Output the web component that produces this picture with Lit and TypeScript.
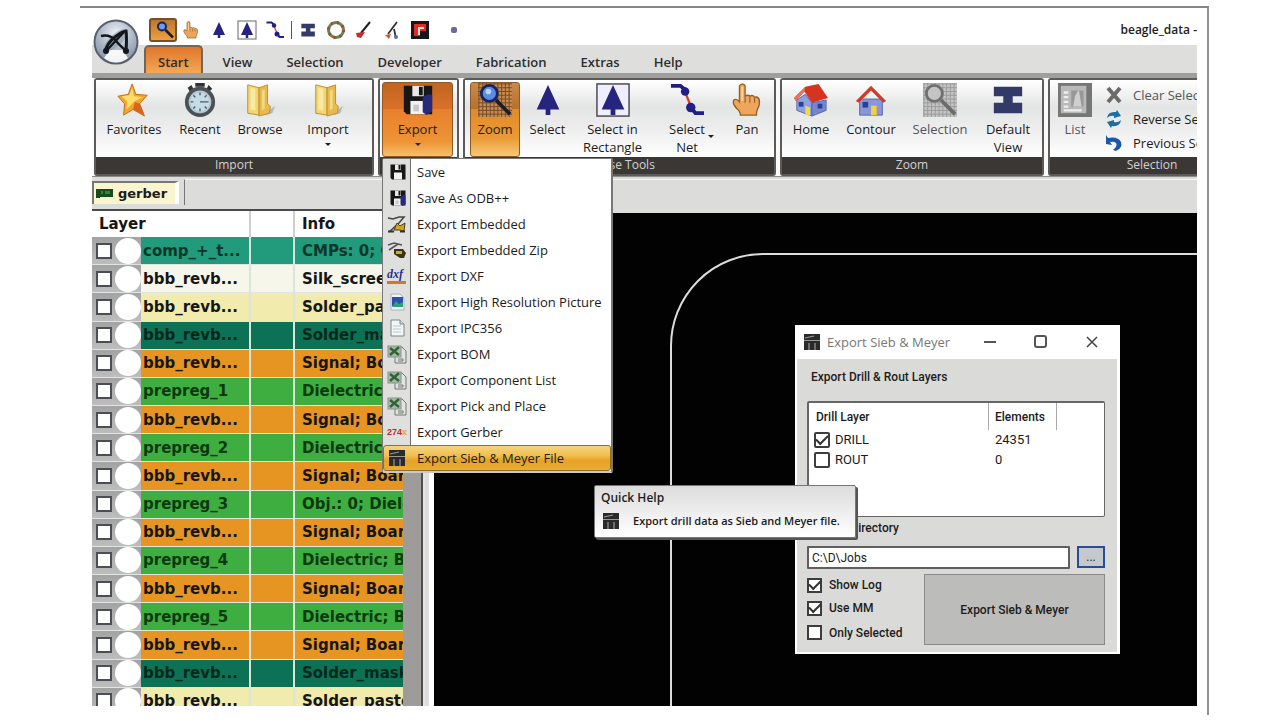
import { LitElement, html, svg, css, nothing } from "lit";
import { customElement, state } from "lit/decorators.js";
import { classMap } from "lit/directives/class-map.js";

const large = (body: unknown) => html`<svg class="ico" viewBox="0 0 36 36" aria-hidden="true">${body}</svg>`;
const small = (body: unknown) => html`<svg class="sico" viewBox="0 0 20 20" aria-hidden="true">${body}</svg>`;

const grid = (c: string, n: number) => {
  const out = [];
  for (let i = 1; i < n; i += 4) out.push(svg`<path d="M${i} 0V${n}M0 ${i}H${n}" stroke=${c} stroke-width="1"/>`);
  return out;
};

const arrow = svg`<path d="M18 2 30 28H20.500V34H15.500V28H6Z" fill="#26247e"/>`;
const hand = svg`<path d="M10 3c2-3 6-2 6 1v10q3-2 5 0 3-2 5 1 4-1 5 3 1 5-2 10-1 2-1 6H11q0-4-4-7-5-6-3-9 3-2 6 2Z" fill="#eda75c" stroke="#9c5c20" stroke-width="1.400"/><path d="M16 15v6M21 15v6M26 16v5" stroke="#9c5c20" stroke-width="1.200"/><path d="M13 4v15" stroke="#f9d3a0" stroke-width="2"/>`;
const net = svg`<path d="M1 3H11L17 8M22 26l5 6H36" fill="none" stroke="#1f1f87" stroke-width="4"/><path d="M17 12l6 15" stroke="#d6402a" stroke-width="2.500"/><circle cx="16" cy="9" r="4.500" fill="#1f1f87"/><circle cx="22" cy="26" r="5" fill="#1f1f87"/>`;
const beam = svg`<path d="M3 4H33V14H23V21H33V32H3V21H13V14H3Z" fill="#323a68"/>`;
const folder = svg`<path d="M24 32l10-8-3 8-7 2Z" fill="#888" opacity=".5"/><path d="M5 2l12 3v29L5 32Z" fill="#f3d673" stroke="#b8902f"/><path d="M17 5l9-3v20l3 3-1 7-11 3Z" fill="#e6bb4b" stroke="#b8902f"/><path d="M8 5l5 1v23l-5-1Z" fill="#fbeaa6"/><path d="M20 8l3-1v20l-3 2Z" fill="#f4d884"/>`;
const disk = svg`<path d="M3 3H33V33H6L3 30Z" fill="#171717"/><rect x="12" y="3" width="12" height="11" fill="#e8e8e8"/><rect x="19" y="4" width="4" height="9" fill="#171717"/><rect x="10" y="19" width="16" height="14" fill="#f2f2f2"/>`;
const disk2 = svg`${disk}<path d="M23 16q5-6 10-3V30l-6 4-4-3Z" fill="#252a7c"/><path d="M13 23h6v7h-6Z" fill="#c7c7c7"/>`;
const house = (roof: string) => svg`<path d="M6 17h24v17H6Z" fill="#8b96d8" stroke="#5763a8"/><path d="M2 19 18 3 34 19l-3 2L18 8 5 21Z" fill=${roof}/><rect x="18" y="24" width="6" height="10" fill="#f0d23a"/><rect x="9" y="20" width="6" height="6" fill="#27408f"/>`;
const home3d = svg`<path d="M3 18 12 12l7 9v14L3 29Z" fill="#8fa0e0" stroke="#5765ad"/><path d="M19 21l15-3v11l-15 6Z" fill="#7787cf" stroke="#5765ad"/><path d="M12 4 26 1l10 15-17 5L11 9 2 19 0 16Z" fill="#d5351f"/><path d="M12 4 0 16l2 3L11 9Z" fill="#e9745a"/><path d="M12 24l5 2v9l-5-2Z" fill="#f2dc3c"/><rect x="5" y="20" width="5" height="5" fill="#27408f"/><rect x="25" y="22" width="5" height="5" fill="#27408f"/>`;
const zoomIcon = svg`<rect width="36" height="36" fill="#c98b4b"/>${grid("#71492a", 36)}<path d="M19 18 34 33" stroke="#1b1b2b" stroke-width="4"/><circle cx="12" cy="11" r="8.500" fill="#5a8ce6" stroke="#16245f" stroke-width="3"/><circle cx="11" cy="9" r="3" fill="#b7d2fb"/>`;
const zoomGray = svg`<rect width="36" height="36" fill="#c4c4c4"/>${grid("#9a9a9a", 36)}<path d="M19 18 34 33" stroke="#6c6c6c" stroke-width="4"/><circle cx="12" cy="11" r="8.500" fill="#c4c4c4" stroke="#707070" stroke-width="3"/>`;
const star = svg`<path d="M16 1l4 11 12 1-8 9 5 13-12-7L7 34l1-12-7-8 11-2Z" fill="#f2a72c" stroke="#c26a17"/><path d="M16 5l2 9 9 1-8 4-9 9 1-8-6-6 8-1Z" fill="#ffdf6b"/><path d="M19 20l5 2 5 12-12-6Z" fill="#d9621d"/>`;
const clock = svg`<path d="M13 0h10v4H13ZM5 5l4-3 2 4-4 3ZM27 2l4 4-3 3-3-3Z" fill="#333"/><circle cx="18" cy="20" r="14" fill="#b7c8d0" stroke="#4a5256" stroke-width="4"/><circle cx="18" cy="20" r="10" fill="#c6dbe3"/><path d="M18 20H27M18 10v3M18 27v3M8 20h3M11 13l2 2M11 27l2-2M25 27l-2-2M25 13l-2 2" stroke="#3a6676" stroke-width="1.500"/>`;
const listGray = svg`<rect width="36" height="36" fill="#767676"/><rect x="3" y="3" width="27" height="29" fill="#b9b9b9"/><path d="M6 10h5M6 15h5M6 20h5M6 25h5M6 29h19" stroke="#eee" stroke-width="2.500"/><path d="M14 8h13v17H14Z" fill="#989898"/><path d="M16 25l2-11 4-7 3 18" fill="#cfcfcf"/>`;
const machine = svg`<rect x="2" y="2" width="16" height="16" fill="#2a2a2a"/><path d="M2 8.500h16M3 6l9-2" stroke="#999" stroke-width="1.200"/><path d="M7 11v7M13 11v7" stroke="#999" stroke-width="1.200"/>`;
const sheet = svg`<path d="M4 2h9l4 4v12H4Z" fill="#f4f7f8" stroke="#788"/><path d="M13 2v4h4" fill="#cdd" stroke="#788"/><path d="M6 8h8M6 11h8M6 14h8" stroke="#b8c8cc"/>`;
const excel = svg`<path d="M8 3h7l4 4v12H8Z" fill="#dfe3e1" stroke="#777"/><rect x="1" y="2" width="13" height="11" fill="#aab8aa" stroke="#8a958a"/><path d="M3 4l9 7M12 3l-9 8" stroke="#2f6636" stroke-width="2.500"/><path d="M11 15h5v2h-5" fill="none" stroke="#777"/>`;

const menuItems: [string, unknown][] = [
  ["Save", svg`<g transform="translate(2 1) scale(.5)">${disk}</g>`],
  ["Save As ODB++", svg`<g transform="translate(2 1) scale(.5)">${disk2}</g>`],
  ["Export Embedded", svg`<path d="M1 4l5 1 6-2 5 0-5 6-10 9" fill="none" stroke="#444" stroke-width="1.600"/><path d="M7 16l3-7 3 3 5-3-1 8-5-1Z" fill="#d7a41d" stroke="#4c3b10"/><path d="M1 17.500h6M13 17.500h5" stroke="#333" stroke-width="2"/>`],
  ["Export Embedded Zip", svg`<path d="M1 5l6-2 8 2M2 10l9-6" fill="none" stroke="#555" stroke-width="1.600"/><path d="M7 9h9l3 4-2 5h-4l-6-4Z" fill="#3b3414"/><path d="M9 11h6v3H9Z" fill="#d0aa28"/>`],
  ["Export DXF", svg`<text x="0" y="12" class="dxf">dxf</text><rect x="0" y="15" width="19" height="3" fill="#d3772b"/>`],
  ["Export High Resolution Picture", svg`<path d="M4 2h9l4 4v12H4Z" fill="#eef3fb" stroke="#a9b4c4"/><rect x="5" y="5" width="11" height="9" fill="#2f4fb0"/><path d="M5 15l4-6 3 3 4-2v5Z" fill="#2fa07a"/>`],
  ["Export IPC356", sheet],
  ["Export BOM", excel],
  ["Export Component List", excel],
  ["Export Pick and Place", excel],
  ["Export Gerber", svg`<text x="0" y="13" class="gbr">274<tspan fill="#e8a33a">x</tspan></text>`],
  ["Export Sieb & Meyer File", machine],
];

const layers: [string, string, string][] = [
  ["comp", "comp_+_t...", "CMPs: 0; Comp"],
  ["silk", "bbb_revb...", "Silk_screen"],
  ["paste", "bbb_revb...", "Solder_paste"],
  ["mask", "bbb_revb...", "Solder_mask"],
  ["signal", "bbb_revb...", "Signal; Board"],
  ["prepreg", "prepreg_1", "Dielectric; Board"],
  ["signal", "bbb_revb...", "Signal; Board"],
  ["prepreg", "prepreg_2", "Dielectric; Board"],
  ["signal", "bbb_revb...", "Signal; Board"],
  ["prepreg", "prepreg_3", "Obj.: 0; Dielectric"],
  ["signal", "bbb_revb...", "Signal; Board"],
  ["prepreg", "prepreg_4", "Dielectric; Board"],
  ["signal", "bbb_revb...", "Signal; Board"],
  ["prepreg", "prepreg_5", "Dielectric; Board"],
  ["signal", "bbb_revb...", "Signal; Board"],
  ["mask", "bbb_revb...", "Solder_mask"],
  ["paste", "bbb_revb...", "Solder_paste"],
];

type Tool = { label: string; icon: unknown; on?: boolean; drop?: boolean; beside?: boolean; dim?: boolean };
const groups: { key: string; title: string; tools: Tool[] }[] = [
  { key: "import", title: "Import", tools: [
    { label: "Favorites", icon: star }, { label: "Recent", icon: clock },
    { label: "Browse", icon: folder }, { label: "Import", icon: folder, drop: true } ] },
  { key: "export", title: "", tools: [{ label: "Export", icon: disk2, on: true, drop: true }] },
  { key: "mouse", title: "Mouse Tools", tools: [
    { label: "Zoom", icon: zoomIcon, on: true }, { label: "Select", icon: arrow },
    { label: "Select in Rectangle", icon: svg`<rect x="1" y="1" width="34" height="34" fill="#eef" stroke="#444" stroke-width="1.500"/>${arrow}` },
    { label: "Select Net", icon: net, beside: true }, { label: "Pan", icon: hand } ] },
  { key: "zoom", title: "Zoom", tools: [
    { label: "Home", icon: home3d }, { label: "Contour", icon: house("#cf3a2a") },
    { label: "Selection", icon: zoomGray, dim: true }, { label: "Default View", icon: beam } ] },
];

const quick: [string, unknown][] = [
  ["Zoom", svg`<g transform="translate(3 1) scale(.5)"><path d="M19 18 34 33" stroke="#1b1b2b" stroke-width="5"/><circle cx="12" cy="11" r="8" fill="#6f9cea" stroke="#16245f" stroke-width="4"/></g>`],
  ["Pan", svg`<g transform="translate(1 1) scale(.5)">${hand}</g>`],
  ["Select", svg`<g transform="translate(1 1) scale(.5)">${arrow}</g>`],
  ["Select in rectangle", svg`<rect x="1" y="1" width="18" height="18" fill="#fff" stroke="#666"/><g transform="translate(1 1) scale(.5)">${arrow}</g>`],
  ["Select net", svg`<g transform="translate(1 1) scale(.5)">${net}</g>`],
  ["Default view", svg`<g transform="translate(2 2) scale(.45)">${beam}</g>`],
  ["Pad", svg`<circle cx="10" cy="10" r="7.500" fill="#fff" stroke="#5d8a4b" stroke-width="3"/><circle cx="10" cy="10" r="7.500" fill="none" stroke="#b0413a" stroke-width="3" stroke-dasharray="2 4"/>`],
  ["Draw line", svg`<path d="M7 13 16 2" stroke="#222" stroke-width="2"/><path d="M2 13l9-1-4 6-4-1Z" fill="#cc2b24"/>`],
  ["Draw text", svg`<path d="M6 14 15 2M12 9l2 9" stroke="#333" stroke-width="1.800"/><path d="M3 15l6-1-2 5Z" fill="#d2572c"/><circle cx="14" cy="17" r="2" fill="#4c74b8"/>`],
  ["Board", svg`<rect x="1" y="1" width="18" height="18" fill="#181818"/><path d="M4 4h12v7h-6v5H4Z" fill="#df2f25"/><path d="M10 7h4v2h-4v6H8V7Z" fill="#f4dcd8"/>`],
];

@customElement("app-root")
export class AppRoot extends LitElement {
  @state() private active = 11;

  static styles = css`
    :host { display: flex; flex-direction: column; box-sizing: border-box; height: 100vh; padding: 6px 71px 6px 80px; background: #fff; color: #1c1c1c; font: 500 13px/18px "Open Sans", "Noto Sans", sans-serif; }
    * { box-sizing: border-box; }
    button { font: inherit; color: inherit; border: 0; background: none; padding: 0; margin: 0; }
    svg { display: block; }
    .frame { flex: 1; min-height: 0; display: flex; border-top: 2px solid #858585; border-right: 2px solid #909090; padding: 0 10px 9px 12px; }
    .app { position: relative; flex: 1; min-width: 0; min-height: 0; display: flex; flex-direction: column; overflow: hidden; }

    .title { flex: none; display: flex; align-items: center; height: 37px; padding-left: 57px; padding-top: 7px; }
    .title h1 { margin: 0 0 0 auto; font-size: 12px; font-weight: 600; white-space: nowrap; }
    .qbtn { width: 28px; height: 24px; display: grid; place-items: center; border-radius: 3px; }
    .qbtn.on { border: 2px solid #76502a; background: linear-gradient(#b9772f, #f0a03e); }
    .sico { flex: none; width: 20px; height: 20px; overflow: visible; }
    .vsep { width: 1px; height: 18px; margin: 0 2px; background: #555; }
    .more { margin-left: 17px; width: 6px; height: 6px; border-radius: 2px; background: #6a6a9a; }
    .orb { position: absolute; left: 1px; top: 11px; width: 46px; height: 46px; z-index: 2; }

    .tabs { flex: none; display: flex; height: 28px; padding-left: 52px; background: #dededc; font-weight: 600; }
    .tabs a { display: grid; place-items: center; padding: 6px 17px 0; color: #2d2d2d; text-decoration: none; }
    .tabs a.on { padding: 4px 12px 0; margin-right: 3px; border: 2px solid #6f675e; border-bottom: 0; border-radius: 5px 5px 0 0; background: linear-gradient(#e0762a, #f3a855); }

    .ribbon { flex: none; display: flex; gap: 4px; padding: 5px 0 0 2px; background: linear-gradient(#9f9f9d 5px, #fafafa 5px); }
    .group { flex: none; border: 2px solid #5d5b5a; border-radius: 3px; }
    .tools { display: grid; height: 77px; background: linear-gradient(#fff, #e3e5e5 35%, #ececec 60%, #fff); }
    .gtitle { height: 17px; background: #3b3735; color: #d2d2d0; font-size: 12px; line-height: 15px; text-align: center; white-space: nowrap; }
    .import .tools { grid-template-columns: 76px 56px 64px 72px; padding-right: 8px; }
    .export .tools { grid-template-columns: 71px; padding: 0 4px 0 2px; }
    .mouse .tools { grid-template-columns: 50px 55px 75px 74px 46px; padding: 0 4px 0 5px; }
    .zoom .tools { grid-template-columns: 58px 62px 76px 60px; padding-right: 4px; }
    .selection { flex: 1 0 208px; }
    .selection .tools { grid-template-columns: 50px 1fr; }
    .tool { position: relative; display: flex; flex-direction: column; align-items: center; padding-top: 3px; }
    .tool .ico { flex: none; width: 34px; height: 34px; margin-bottom: 3px; }
    .tool.on { border: 1px solid #8a5a28; border-radius: 3px; margin-top: 2px; padding-top: 0; background: linear-gradient(#c0651f, #d9702a 35%, #e87f2b 36%, #ee9436 80%, #f7bf6a); }
    .mouse .tool.on { background: linear-gradient(#c98b4b, #b9702c 35%, #e08a2a 36%, #ea9a34 75%, #f7c878); }
    .tool.dim { color: #555; }
    .tool.narrow { padding-left: 14px; padding-right: 14px; }
    .drop { width: 0; height: 0; border: 3px solid transparent; border-top-color: #222; margin-top: 5px; }
    .drop.beside { position: absolute; right: 10px; top: 50px; }
    .cmds { display: flex; flex-direction: column; padding-top: 3px; }
    .cmd { display: flex; align-items: center; gap: 9px; height: 24px; padding-left: 4px; white-space: nowrap; }
    .cmd.dim { color: #555; }

    .docs { flex: none; display: flex; height: 33px; border-top: 1px solid #8b8b89; background: #dcdcda; }
    .doc { display: flex; align-items: center; gap: 5px; width: 87px; height: 23px; margin: 4px 5px 0 0; padding-left: 2px; border: 1px solid #777; border-width: 2px 0 0 2px; border-right: 4px solid #fff; background: #f8f5cf; font: bold 13px/18px "DejaVu Sans", sans-serif; }
    .doc .pcb { width: 17px; height: 9px; }
    .docfill { flex: 1; margin-top: 2px; border-left: 1px solid #777; border-top: 1px solid #f5f5f5; height: 26px; }

    .work { flex: 1; min-height: 0; display: flex; }
    .side { flex: none; width: 342px; display: flex; overflow: hidden; border-top: 2px solid #4a4a4a; background: #e4e4e4; }
    .tablebox { width: 311px; overflow: hidden; }
    .scroll { width: 18px; background: #9d9c9b; }
    .split { width: 4px; border-left: 2px solid #4e4e4e; }
    .split2 { width: 9px; border-left: 4px solid #dedede; background: #fff; }
    table { border-collapse: separate; border-spacing: 0; }
    .layers { table-layout: fixed; width: 311px; height: 505px; font: bold 15px/18px "DejaVu Sans", sans-serif; color: #161616; }
    .layers th { height: 26px; padding: 0 7px; text-align: left; background: #fff; border-right: 2px solid #cfcfcf; }
    .layers td { padding: 0 0 0 2px; overflow: hidden; white-space: nowrap; border-right: 2px solid #d9e6dc; border-bottom: 1px solid #dfe6df; }
    .layers th:last-child, .layers td:last-child { border-right: 0; padding-left: 7px; }
    .layers td.vis { padding: 0 0 0 4px; border-right: 0; background: linear-gradient(#a3a3a3, #bdbdbd); }
    .c1 { width: 49px; } .c2 { width: 110px; } .c3 { width: 44px; }
    .visrow { display: flex; align-items: center; gap: 3px; }
    .knob { width: 26px; height: 26px; border-radius: 50%; background: #fff; }
    .comp { background: #229a7c; color: #0b3629; }
    .silk { background: #f7f6ea; }
    .paste { background: #f1ebae; }
    .mask { background: #0d7255; color: #04271b; }
    .signal { background: #e69422; }
    .prepreg { background: #3eae40; color: #0c3a10; }

    input[type="checkbox"] { appearance: none; flex: none; display: grid; place-items: center; width: 16px; height: 16px; margin: 0; border: 2px solid #3d3d3d; background: #fff; }
    input[type="checkbox"]:checked::after { content: ""; width: 10px; height: 5px; margin-top: -3px; border: solid #333; border-width: 0 0 2px 2px; transform: rotate(-45deg); }
    .side input[type="checkbox"] { border-color: #4b4f55; }

    .canvas { position: relative; flex: 1; min-width: 0; border-top: 4px solid #dcdcda; background: #020203; overflow: hidden; }
    .outline { position: absolute; inset: 0; width: 100%; height: 100%; }

    .menu { position: absolute; left: 290px; top: 150px; width: 231px; z-index: 3; margin: 0; padding: 0; border: 1px solid #777; border-right-width: 2px; border-bottom: 2px solid #c9c9c9; border-radius: 2px; background: linear-gradient(90deg, #dfdfdd 27px, #6f6f6f 27px, #6f6f6f 28px, #fff 28px); list-style: none; font-weight: 400; }
    .menu button { display: flex; align-items: center; gap: 10px; width: 100%; height: 26px; padding-left: 4px; text-align: left; white-space: nowrap; }
    .menu button.on { border: 1px solid #93701f; border-radius: 3px; padding-left: 3px; background: linear-gradient(#f3d483, #f1bf4d 40%, #e6a226 60%, #e9ac36); }
    .dxf { font: italic bold 12px "Liberation Serif", serif; fill: #2a2f86; }
    .gbr { font: bold 9px "Liberation Sans", sans-serif; fill: #c3272b; }

    .tip { position: absolute; left: 502px; top: 477px; width: 262px; z-index: 3; padding: 3px 6px 4px; border: 1px solid #777; border-radius: 2px; background: linear-gradient(#dcdcdc, #fff); box-shadow: 2px 2px 0 #555; font-size: 12px; }
    .tip strong { display: block; font-weight: 600; }
    .tip p { display: flex; align-items: center; gap: 12px; margin: 4px 0 2px; font-weight: 600; font-size: 11px; white-space: nowrap; }

    .dialog { position: absolute; left: 361px; top: 112px; width: 325px; border: solid #fff; border-width: 0 3px 2px 2px; background: #dadbd9; font: 12px/18px Roboto, "Liberation Sans", sans-serif; }
    .dhead { display: flex; align-items: center; height: 34px; padding-left: 5px; background: #fff; color: #777; font: 13px/18px "Open Sans", sans-serif; }
    .dhead h2 { margin: 0 auto 0 5px; font: inherit; }
    .dhead button { width: 51px; height: 34px; display: grid; place-items: center; }
    .dbody { display: flex; flex-direction: column; padding: 9px 12px 7px 10px; }
    .dbody h3 { margin: 0 0 15px 4px; font: inherit; font-weight: 500; }
    .listbox { height: 116px; border: 2px solid #666; border-width: 2px 1px 1px 2px; border-radius: 2px; background: #fff; padding-left: 1px; }
    .listbox th { height: 27px; padding: 0 7px 0 6px; border-right: 1px solid #aaa; text-align: left; font-weight: 500; }
    .listbox td { height: 20px; padding: 0 0 0 6px; font-size: 13px; line-height: 18px; }
    .listbox td:first-child { padding-left: 4px; }
    .chk { display: flex; align-items: center; gap: 5px; }
    .listbox input { border-radius: 2px; }
    .d1 { width: 179px; } .d2 { width: 68px; }
    .dbody label.dir { margin: 2px 0 9px 4px; font-weight: 500; }
    .path { display: flex; gap: 7px; }
    .path input { flex: 1; min-width: 0; height: 23px; padding: 0 3px; border: 2px solid #5f5f5f; border-radius: 1px; background: #fff; color: inherit; font: 12px/18px Roboto, sans-serif; }
    .browse { width: 28px; height: 22px; border: 2px solid #2b4c93; background: #c6c9cc; line-height: 14px; }
    .foot { display: flex; gap: 20px; margin-top: 5px; }
    .opts { flex: 1; display: grid; grid-template-rows: 22px 24px 25px; align-items: center; font-weight: 500; white-space: nowrap; }
    .opts .chk { gap: 7px; }
    .opts input { width: 15px; height: 15px; }
    .go { width: 181px; height: 71px; border: 1px solid #8a8a8a; background: #bcbcbb; font-weight: 500; }
  `;

  private tool(t: Tool) {
    return html`<button class=${classMap({ tool: true, on: !!t.on, dim: !!t.dim, narrow: !!t.beside })}>
      ${large(t.icon)}<span>${t.label}</span>
      ${t.drop ? html`<i class="drop"></i>` : nothing}
      ${t.beside ? html`<i class="drop beside"></i>` : nothing}
    </button>`;
  }

  render() {
    return html`<div class="frame"><div class="app">
      <header class="title">
        ${quick.map(([name, icon], i) => html`
          ${i === 5 ? html`<span class="vsep"></span>` : nothing}
          <button class="qbtn ${i === 0 ? "on" : ""}" aria-label=${name}>${small(icon)}</button>`)}
        <button class="more" aria-label="More"></button>
        <h1>beagle_data -</h1>
      </header>
      <svg class="orb" viewBox="0 0 46 46" aria-hidden="true">
        <defs><radialGradient id="orb" cx=".5" cy=".3" r=".7"><stop offset="0" stop-color="#eef2f7"/><stop offset=".6" stop-color="#a9b4c4"/><stop offset="1" stop-color="#8290a5"/></radialGradient></defs>
        <circle cx="23" cy="23" r="21.500" fill="url(#orb)" stroke="#59606c" stroke-width="2"/>
        <path d="M11 39q12 9 24 0l-6-8H17Z" fill="#fff" opacity=".9"/>
        <ellipse cx="23" cy="21" rx="15" ry="6" transform="rotate(-42 23 21)" fill="#8793a5" opacity=".6"/>
        <path d="M12 33q2-9 10-15T33 12q1 6 0 20" fill="none" stroke="#14171c" stroke-width="3"/>
        <path d="M8 17q9-2 15 5t11 10M14 31 31 13" fill="none" stroke="#14171c" stroke-width="2.500"/>
        <circle cx="13" cy="32" r="3" fill="#14171c"/><circle cx="33" cy="32" r="3" fill="#14171c"/>
      </svg>
      <nav class="tabs">
        ${["Start", "View", "Selection", "Developer", "Fabrication", "Extras", "Help"].map((t, i) =>
          html`<a href="#${t}" class=${i === 0 ? "on" : ""}>${t}</a>`)}
      </nav>
      <section class="ribbon">
        ${groups.map((g) => html`<div class="group ${g.key}">
          <div class="tools">${g.tools.map((t) => this.tool(t))}</div>
          <div class="gtitle">${g.title}</div>
        </div>`)}
        <div class="group selection">
          <div class="tools">
            ${this.tool({ label: "List", icon: listGray, dim: true })}
            <div class="cmds">
              <button class="cmd dim">${small(svg`<path d="M4 3l12 14M16 3 4 17" stroke="#6b6b6b" stroke-width="4"/>`)}Clear Selection</button>
              <button class="cmd">${small(svg`<path d="M3 9q1-7 9-6l1-2 4 6-7 2V7q-4-1-7 2ZM17 11q-1 7-9 6l-1 2-4-6 7-2v2q4 1 7-2Z" fill="#1c6fa5"/>`)}Reverse Selection</button>
              <button class="cmd">${small(svg`<path d="M2 2l2 3q10-2 13 4 2 6-5 9l-3-1q5-4 3-7-2-2-6-1l2 3-6-1Z" fill="#1d57a8"/>`)}Previous Selection</button>
            </div>
          </div>
          <div class="gtitle">Selection</div>
        </div>
      </section>
      <div class="docs">
        <button class="doc"><svg class="pcb" viewBox="0 0 17 9" aria-hidden="true"><path d="M0 0h17v8H4v1H0Z" fill="#174d1c"/><path d="M5 2h2v3H5ZM9 2h5v3H9Z" fill="#2f8a37"/></svg>gerber</button>
        <div class="docfill"></div>
      </div>
      <main class="work">
        <aside class="side">
          <div class="tablebox"><table class="layers">
            <colgroup><col class="c1"><col class="c2"><col class="c3"><col></colgroup>
            <thead><tr><th colspan="2">Layer</th><th></th><th>Info</th></tr></thead>
            <tbody>${layers.map(([kind, name, info]) => html`<tr class=${kind}>
              <td class="vis"><div class="visrow"><input type="checkbox" aria-label=${name}><span class="knob"></span></div></td>
              <td>${name}</td><td></td><td>${info}</td></tr>`)}</tbody>
          </table></div>
          <div class="scroll"></div><div class="split"></div><div class="split2"></div>
        </aside>
        <section class="canvas">
          <svg class="outline" aria-hidden="true"><path d="M4000 41H330A92 92 0 0 0 237 134V4000" fill="none" stroke="#dcdcdc" stroke-width="2"/></svg>
          <section class="dialog" role="dialog" aria-label="Export Sieb & Meyer">
            <div class="dhead">${small(machine)}<h2>Export Sieb &amp; Meyer</h2>
              <button aria-label="Minimize"><svg width="12" height="12"><path d="M0 6h12" stroke="#555" stroke-width="2"/></svg></button>
              <button aria-label="Maximize"><svg width="14" height="14"><rect x="1" y="1" width="11" height="11" rx="2" fill="none" stroke="#555" stroke-width="2"/></svg></button>
              <button aria-label="Close"><svg width="12" height="12"><path d="M1 1l10 10M11 1 1 11" stroke="#444" stroke-width="1.500"/></svg></button>
            </div>
            <div class="dbody">
              <h3>Export Drill &amp; Rout Layers</h3>
              <div class="listbox"><table>
                <colgroup><col class="d1"><col class="d2"></colgroup>
                <thead><tr><th>Drill Layer</th><th>Elements</th></tr></thead>
                <tbody>
                  <tr><td><label class="chk"><input type="checkbox" checked>DRILL</label></td><td>24351</td></tr>
                  <tr><td><label class="chk"><input type="checkbox">ROUT</label></td><td>0</td></tr>
                </tbody>
              </table></div>
              <label class="dir" for="dir">Output Directory</label>
              <div class="path"><input id="dir" type="text" value="C:\\D\\Jobs"><button class="browse" aria-label="Browse">...</button></div>
              <div class="foot">
                <div class="opts">
                  <label class="chk"><input type="checkbox" checked>Show Log</label>
                  <label class="chk"><input type="checkbox" checked>Use MM</label>
                  <label class="chk"><input type="checkbox">Only Selected</label>
                </div>
                <button class="go">Export Sieb &amp; Meyer</button>
              </div>
            </div>
          </section>
        </section>
      </main>
      <menu class="menu">
        ${menuItems.map(([label, icon], i) => html`<li><button class=${i === this.active ? "on" : ""}
          @mouseenter=${() => (this.active = i)}>${small(icon)}${label}</button></li>`)}
      </menu>
      <div class="tip" role="tooltip"><strong>Quick Help</strong><p>${small(machine)}Export drill data as Sieb and Meyer file.</p></div>
    </div></div>`;
  }
}
